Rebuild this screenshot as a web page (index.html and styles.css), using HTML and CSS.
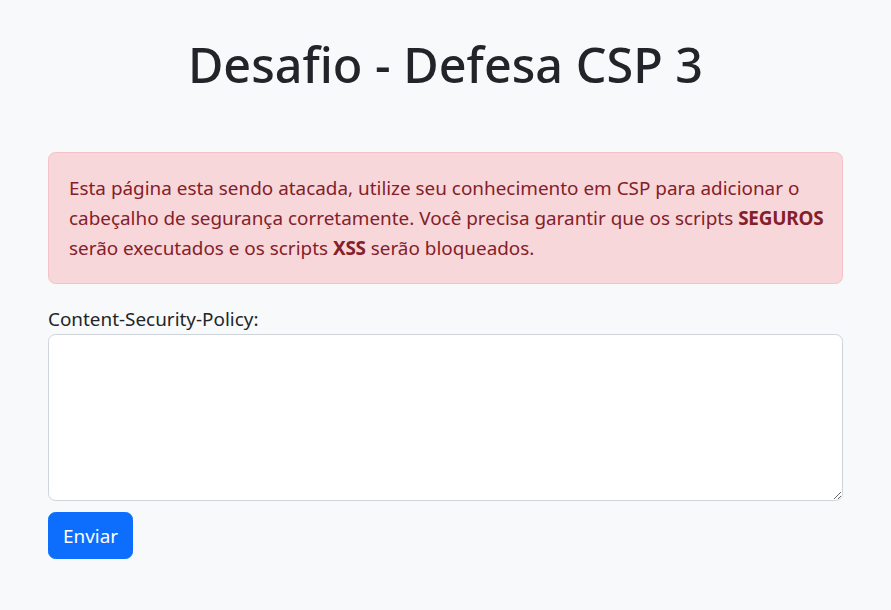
FILE: index.html
```html
<!DOCTYPE html>
<html lang="pt-BR">
<head>
<meta charset="utf-8">
<title>Desafio - Defesa CSP 3</title>
<link rel="stylesheet" href="styles.css">
</head>
<body>
<main class="page">
  <h1 class="title">Desafio - Defesa CSP 3</h1>
  <div class="alert">
    Esta página esta sendo atacada, utilize seu conhecimento em CSP para adicionar o cabeçalho de segurança corretamente. Você precisa garantir que os scripts <strong>SEGUROS</strong> serão executados e os scripts <strong>XSS</strong> serão bloqueados.
  </div>
  <form class="form">
    <label class="label" for="csp">Content-Security-Policy:</label>
    <textarea class="field" id="csp" rows="5"></textarea>
    <button class="btn" type="button">Enviar</button>
  </form>
</main>
</body>
</html>
```
FILE: styles.css
```css
html, body {
  margin: 0;
  padding: 0;
}
body {
  background: #f8f9fa;
  color: #212529;
  font-family: "Noto Sans", "Open Sans", sans-serif;
  font-size: 18.9px;
  line-height: 30px;
}
.page {
  padding: 0 48px;
}
.title {
  margin: 33px 0 57px;
  font-size: 48.5px;
  line-height: 62px;
  font-weight: 500;
  text-align: center;
}
.alert {
  background: #f8d7da;
  border: 1px solid #f5c2c7;
  color: #842029;
  border-radius: 7.5px;
  padding: 20px 12px 20px 20px;
  margin-bottom: 20px;
}
.alert strong {
  font-weight: 700;
  letter-spacing: -0.2px;
}
.form {
  display: flex;
  flex-direction: column;
  align-items: flex-start;
}
.label {
  display: block;
}
.field {
  display: block;
  width: 100%;
  height: 167px;
  box-sizing: border-box;
  border: 1px solid #ced4da;
  border-radius: 7.5px;
  background: #fff;
  padding: 7.5px 15px;
  font: inherit;
  margin: 0 0 11px;
}
.btn {
  background: #0d6efd;
  color: #fff;
  border: 1px solid #0d6efd;
  border-radius: 7.5px;
  font: inherit;
  line-height: 30px;
  padding: 7.5px 14px;
  cursor: pointer;
}
```
